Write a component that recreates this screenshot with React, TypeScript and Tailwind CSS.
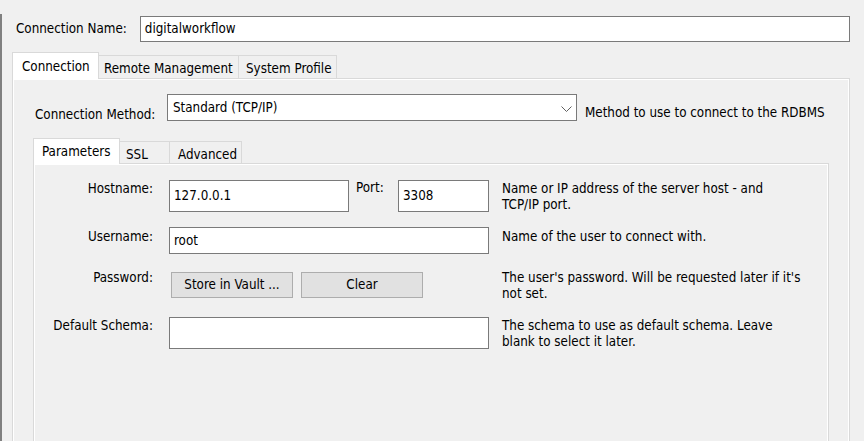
import { ReactNode } from "react";

const Input = ({ value, className }: { value?: string; className: string }) => (
  <div
    className={`border border-[#7a7a7a] bg-white pl-[4px] flex items-center whitespace-nowrap ${className}`}
  >
    {value}
  </div>
);

const Row = ({
  label,
  labelPad,
  desc,
  height,
  top,
  children,
}: {
  label: string;
  labelPad: string;
  desc: ReactNode;
  height: string;
  top: string;
  children: ReactNode;
}) => (
  <div className={`flex items-start ${height} ${top}`}>
    <div className={`w-[119px] text-right leading-[16px] whitespace-nowrap ${labelPad}`}>{label}</div>
    <div className="ml-[16px] w-[320px] flex items-start h-full">{children}</div>
    <div className={`ml-[13px] leading-[16px] whitespace-nowrap ${labelPad}`}>{desc}</div>
  </div>
);

export default function App() {
  return (
    <div className="w-[864px] h-[441px] overflow-hidden bg-[#f0f0f0] pt-[14px] text-[13.3px] text-black font-['DejaVu_Sans_Condensed','Liberation_Sans',Arial,sans-serif]">
      <div className="h-[460px] flex flex-col border-l-2 border-[#808080] pl-[10px] pr-[14px]">
        <div className="flex items-center pt-[2px]">
          <span className="ml-[4px] w-[124px] whitespace-nowrap">Connection Name:</span>
          <Input value="digitalworkflow" className="w-[711px] h-[26px]" />
        </div>

        <div className="flex items-end mt-[10px] whitespace-nowrap">
          <div className="relative z-10 -mb-px h-[27px] w-[87px] pl-[9px] pt-[4px] bg-white border border-b-0 border-[#d9d9d9]">
            Connection
          </div>
          <div className="h-[23px] w-[140px] pl-[5px] pt-[3px] border-t border-r border-[#d9d9d9]">
            Remote Management
          </div>
          <div className="h-[23px] w-[98px] pl-[7px] pt-[3px] border-t border-r border-[#d9d9d9]">
            System Profile
          </div>
        </div>

        <div className="flex-1 flex flex-col w-[838px] border border-[#d9d9d9] shadow-[inset_0_0_0_1px_#ffffff] pl-[20px] pt-[15px]">
          <div className="flex items-start ml-[2px] whitespace-nowrap">
            <span className="w-[132px] pt-[13px] leading-[16px]">Connection Method:</span>
            <div className="w-[410px] h-[27px] border border-[#7a7a7a] bg-white pl-[5px] pr-[4px] flex items-center justify-between">
              <span>Standard (TCP/IP)</span>
              <svg width="11" height="7" viewBox="0 0 11 7" className="mt-[4px]">
                <polyline points="0.5,0.5 5.5,5.5 10.5,0.5" fill="none" stroke="#606060" strokeWidth="1" />
              </svg>
            </div>
            <span className="ml-[8px] pt-[11px] leading-[16px]">Method to use to connect to the RDBMS</span>
          </div>

          <div className="flex items-end mt-[15px] whitespace-nowrap">
            <div className="relative z-10 -mb-px h-[26px] w-[87px] pl-[8px] pt-[3px] bg-white border border-b-0 border-[#d9d9d9]">
              Parameters
            </div>
            <div className="h-[22px] w-[50px] pl-[6px] pt-[3px] border-t border-r border-[#d9d9d9]">SSL</div>
            <div className="h-[22px] w-[72px] pl-[8px] pt-[3px] border-t border-r border-[#d9d9d9]">Advanced</div>
          </div>

          <div className="flex-1 w-[796px] border border-[#d9d9d9] shadow-[inset_0_0_0_1px_#ffffff] pt-[16px]">
            <Row
              label="Hostname:"
              labelPad="pt-[1px]"
              height="h-[32px]"
              top=""
              desc={
                <>
                  Name or IP address of the server host - and
                  <br />
                  TCP/IP port.
                </>
              }
            >
              <Input value="127.0.0.1" className="w-[180px] h-[32px]" />
              <span className="ml-[7px] leading-[16px]">Port:</span>
              <Input value="3308" className="ml-auto w-[91px] h-[32px]" />
            </Row>

            <Row
              label="Username:"
              labelPad="pt-[2px]"
              height="h-[27px]"
              top="mt-[15px]"
              desc="Name of the user to connect with."
            >
              <Input value="root" className="w-[320px] h-[27px]" />
            </Row>

            <Row
              label="Password:"
              labelPad="-mt-[2px]"
              height="h-[26px]"
              top="mt-[18px]"
              desc={
                <>
                  The user's password. Will be requested later if it's
                  <br />
                  not set.
                </>
              }
            >
              <button className="ml-[2px] w-[122px] h-[26px] bg-[#e1e1e1] border border-[#adadad] whitespace-nowrap">
                Store in Vault ...
              </button>
              <button className="ml-[8px] w-[122px] h-[26px] bg-[#e1e1e1] border border-[#adadad]">
                Clear
              </button>
            </Row>

            <Row
              label="Default Schema:"
              labelPad="pt-[1px]"
              height="h-[32px]"
              top="mt-[19px]"
              desc={
                <>
                  The schema to use as default schema. Leave
                  <br />
                  blank to select it later.
                </>
              }
            >
              <Input className="w-[320px] h-[32px]" />
            </Row>
          </div>
        </div>
      </div>
    </div>
  );
}
